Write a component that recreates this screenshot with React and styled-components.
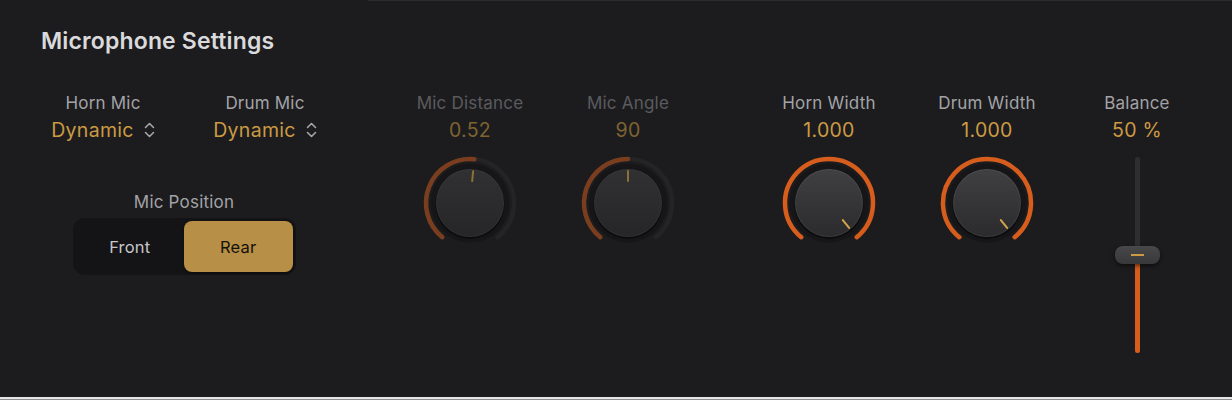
import React from "react";
import styled, { createGlobalStyle } from "styled-components";

const GlobalStyle = createGlobalStyle`
  html, body {
    margin: 0;
    padding: 0;
    background: #1c1c1e;
  }
  * {
    box-sizing: border-box;
  }
`;

const GOLD = "#cc9a43";
const ORANGE = "#d65d1c";

const Panel = styled.div`
  position: relative;
  width: 1232px;
  height: 400px;
  background: #1c1c1e;
  font-family: Inter, "Noto Sans", sans-serif;
  overflow: hidden;
  border-bottom: 1px solid #8f8f91;
  box-shadow: inset 0 -2px 0 #e6e6e6;

  &::before {
    content: "";
    position: absolute;
    top: 0;
    left: 368px;
    right: 0;
    height: 1px;
    background: #2b2b2d;
  }
`;

const Title = styled.h2`
  margin: 0;
  padding: 27px 0 0 41px;
  font-size: 23px;
  line-height: 28px;
  font-weight: 600;
  color: #dadadc;
  letter-spacing: 0.15px;
`;

const Body = styled.div`
  display: flex;
  align-items: flex-start;
  padding: 38px 0 0 28px;
`;

const LeftPanel = styled.div`
  display: grid;
  grid-template-columns: 150px 150px;
  column-gap: 12px;
  row-gap: 50px;
  width: 312px;
`;

const Column = styled.div`
  display: flex;
  flex-direction: column;
  align-items: center;
  width: ${(p) => p.$width || 150}px;
  margin-left: ${(p) => p.$offset || 0}px;
`;

const Label = styled.div`
  font-size: 17px;
  line-height: 20px;
  letter-spacing: 0.2px;
  color: ${(p) => (p.$dim ? "#5b5b5f" : "#a3a3a7")};
  white-space: nowrap;
`;

const Value = styled.div`
  display: flex;
  align-items: center;
  gap: 10px;
  margin-top: 5px;
  font-size: 19.5px;
  line-height: 24px;
  letter-spacing: 0.3px;
  color: ${(p) => (p.$dim ? "#7f6431" : GOLD)};
  white-space: nowrap;
`;

const PositionBlock = styled.div`
  grid-column: 1 / span 2;
  display: flex;
  flex-direction: column;
  align-items: center;
  gap: 6px;
`;

const Segmented = styled.div`
  display: flex;
  width: 223px;
  height: 57px;
  padding: 3px;
  border-radius: 12px;
  background: #141416;
`;

const Segment = styled.div`
  flex: 1;
  display: flex;
  align-items: center;
  justify-content: center;
  border-radius: 8px;
  font-size: 16.5px;
  letter-spacing: 0.2px;
  color: ${(p) => (p.$active ? "#15120c" : "#c6c6c9")};
  background: ${(p) => (p.$active ? "#b78f46" : "transparent")};
  box-shadow: ${(p) => (p.$active ? "0 1px 3px rgba(0,0,0,0.5)" : "none")};
`;

const KnobWrap = styled.div`
  margin-top: 11px;
  width: 100px;
  height: 100px;
`;

const SliderTrack = styled.div`
  position: relative;
  margin-top: 15px;
  width: 5px;
  height: 196px;
  border-radius: 3px;
  background: #2e2e31;
`;

const SliderFill = styled.div`
  position: absolute;
  left: 0;
  right: 0;
  bottom: 0;
  border-radius: 3px;
  background: ${ORANGE};
`;

const SliderHandle = styled.div`
  position: absolute;
  left: 50%;
  width: 45px;
  height: 18px;
  margin-left: -22.5px;
  margin-top: -9px;
  border-radius: 8px;
  background: linear-gradient(#48484b, #38383b);
  box-shadow: 0 2px 4px rgba(0, 0, 0, 0.55);

  &::after {
    content: "";
    position: absolute;
    left: 16px;
    top: 8px;
    width: 13px;
    height: 1.5px;
    background: ${GOLD};
  }
`;

const Chevrons = () => (
  <svg width="11" height="18" viewBox="0 0 11 18" fill="none">
    <path
      d="M1.5 6.5 L5.5 2.5 L9.5 6.5 M1.5 11.5 L5.5 15.5 L9.5 11.5"
      stroke="#a6a6a9"
      strokeWidth="1.6"
      strokeLinecap="round"
      strokeLinejoin="round"
    />
  </svg>
);

const polar = (r, deg) => {
  const a = (deg * Math.PI) / 180;
  return [50 + r * Math.sin(a), 50 - r * Math.cos(a)];
};

const arc = (r, from, to) => {
  const [x1, y1] = polar(r, from);
  const [x2, y2] = polar(r, to);
  const large = to - from > 180 ? 1 : 0;
  return `M${x1} ${y1} A${r} ${r} 0 ${large} 1 ${x2} ${y2}`;
};

const Knob = ({ value, dim, id }) => {
  const start = -141;
  const end = 141;
  const angle = start + (end - start) * value;
  const [px1, py1] = polar(22, angle);
  const [px2, py2] = polar(32, angle);
  return (
    <svg width="100" height="100" viewBox="0 0 100 100">
      <defs>
        <linearGradient id={`body-${id}`} x1="0" y1="0" x2="0" y2="1">
          <stop offset="0" stopColor={dim ? "#313134" : "#404043"} />
          <stop offset="1" stopColor={dim ? "#262628" : "#2b2b2d"} />
        </linearGradient>
      </defs>
      <path
        d={arc(44, start, end)}
        stroke="#242426"
        strokeWidth="4.5"
        fill="none"
        strokeLinecap="round"
      />
      <path
        d={arc(44, start, angle)}
        stroke={dim ? "#7a3e1f" : ORANGE}
        strokeWidth="4.5"
        fill="none"
        strokeLinecap="round"
      />
      <circle cx="50" cy="50" r="39.5" fill="#161618" />
      <circle cx="50" cy="51.5" r="34.5" fill="rgba(0,0,0,0.45)" />
      <circle cx="50" cy="50" r="34" fill={`url(#body-${id})`} />
      <circle
        cx="50"
        cy="50"
        r="33.5"
        fill="none"
        stroke={dim ? "rgba(255,255,255,0.04)" : "rgba(255,255,255,0.07)"}
        strokeWidth="1"
      />
      <line
        x1={px1}
        y1={py1}
        x2={px2}
        y2={py2}
        stroke={dim ? "#8c7136" : "#d2a54a"}
        strokeWidth="2"
        strokeLinecap="round"
      />
    </svg>
  );
};

const knobs = [
  { id: "dist", label: "Mic Distance", value: "0.52", pos: 0.52, dim: true, offset: 70 },
  { id: "angle", label: "Mic Angle", value: "90", pos: 0.5, dim: true, offset: 38 },
  { id: "horn", label: "Horn Width", value: "1.000", pos: 1, dim: false, offset: 81 },
  { id: "drum", label: "Drum Width", value: "1.000", pos: 1, dim: false, offset: 38 },
];

export default function App() {
  const balance = 0.5;
  return (
    <Panel>
      <GlobalStyle />
      <Title>Microphone Settings</Title>
      <Body>
        <LeftPanel>
          <Column>
            <Label>Horn Mic</Label>
            <Value>
              Dynamic
              <Chevrons />
            </Value>
          </Column>
          <Column>
            <Label>Drum Mic</Label>
            <Value>
              Dynamic
              <Chevrons />
            </Value>
          </Column>
          <PositionBlock>
            <Label>Mic Position</Label>
            <Segmented>
              <Segment>Front</Segment>
              <Segment $active>Rear</Segment>
            </Segmented>
          </PositionBlock>
        </LeftPanel>

        {knobs.map((k) => (
          <Column key={k.id} $width={120} $offset={k.offset}>
            <Label $dim={k.dim}>{k.label}</Label>
            <Value $dim={k.dim}>{k.value}</Value>
            <KnobWrap>
              <Knob id={k.id} value={k.pos} dim={k.dim} />
            </KnobWrap>
          </Column>
        ))}

        <Column $width={120} $offset={30}>
          <Label>Balance</Label>
          <Value>50 %</Value>
          <SliderTrack>
            <SliderFill style={{ height: `${balance * 100}%` }} />
            <SliderHandle style={{ top: `${(1 - balance) * 100}%` }} />
          </SliderTrack>
        </Column>
      </Body>
    </Panel>
  );
}
